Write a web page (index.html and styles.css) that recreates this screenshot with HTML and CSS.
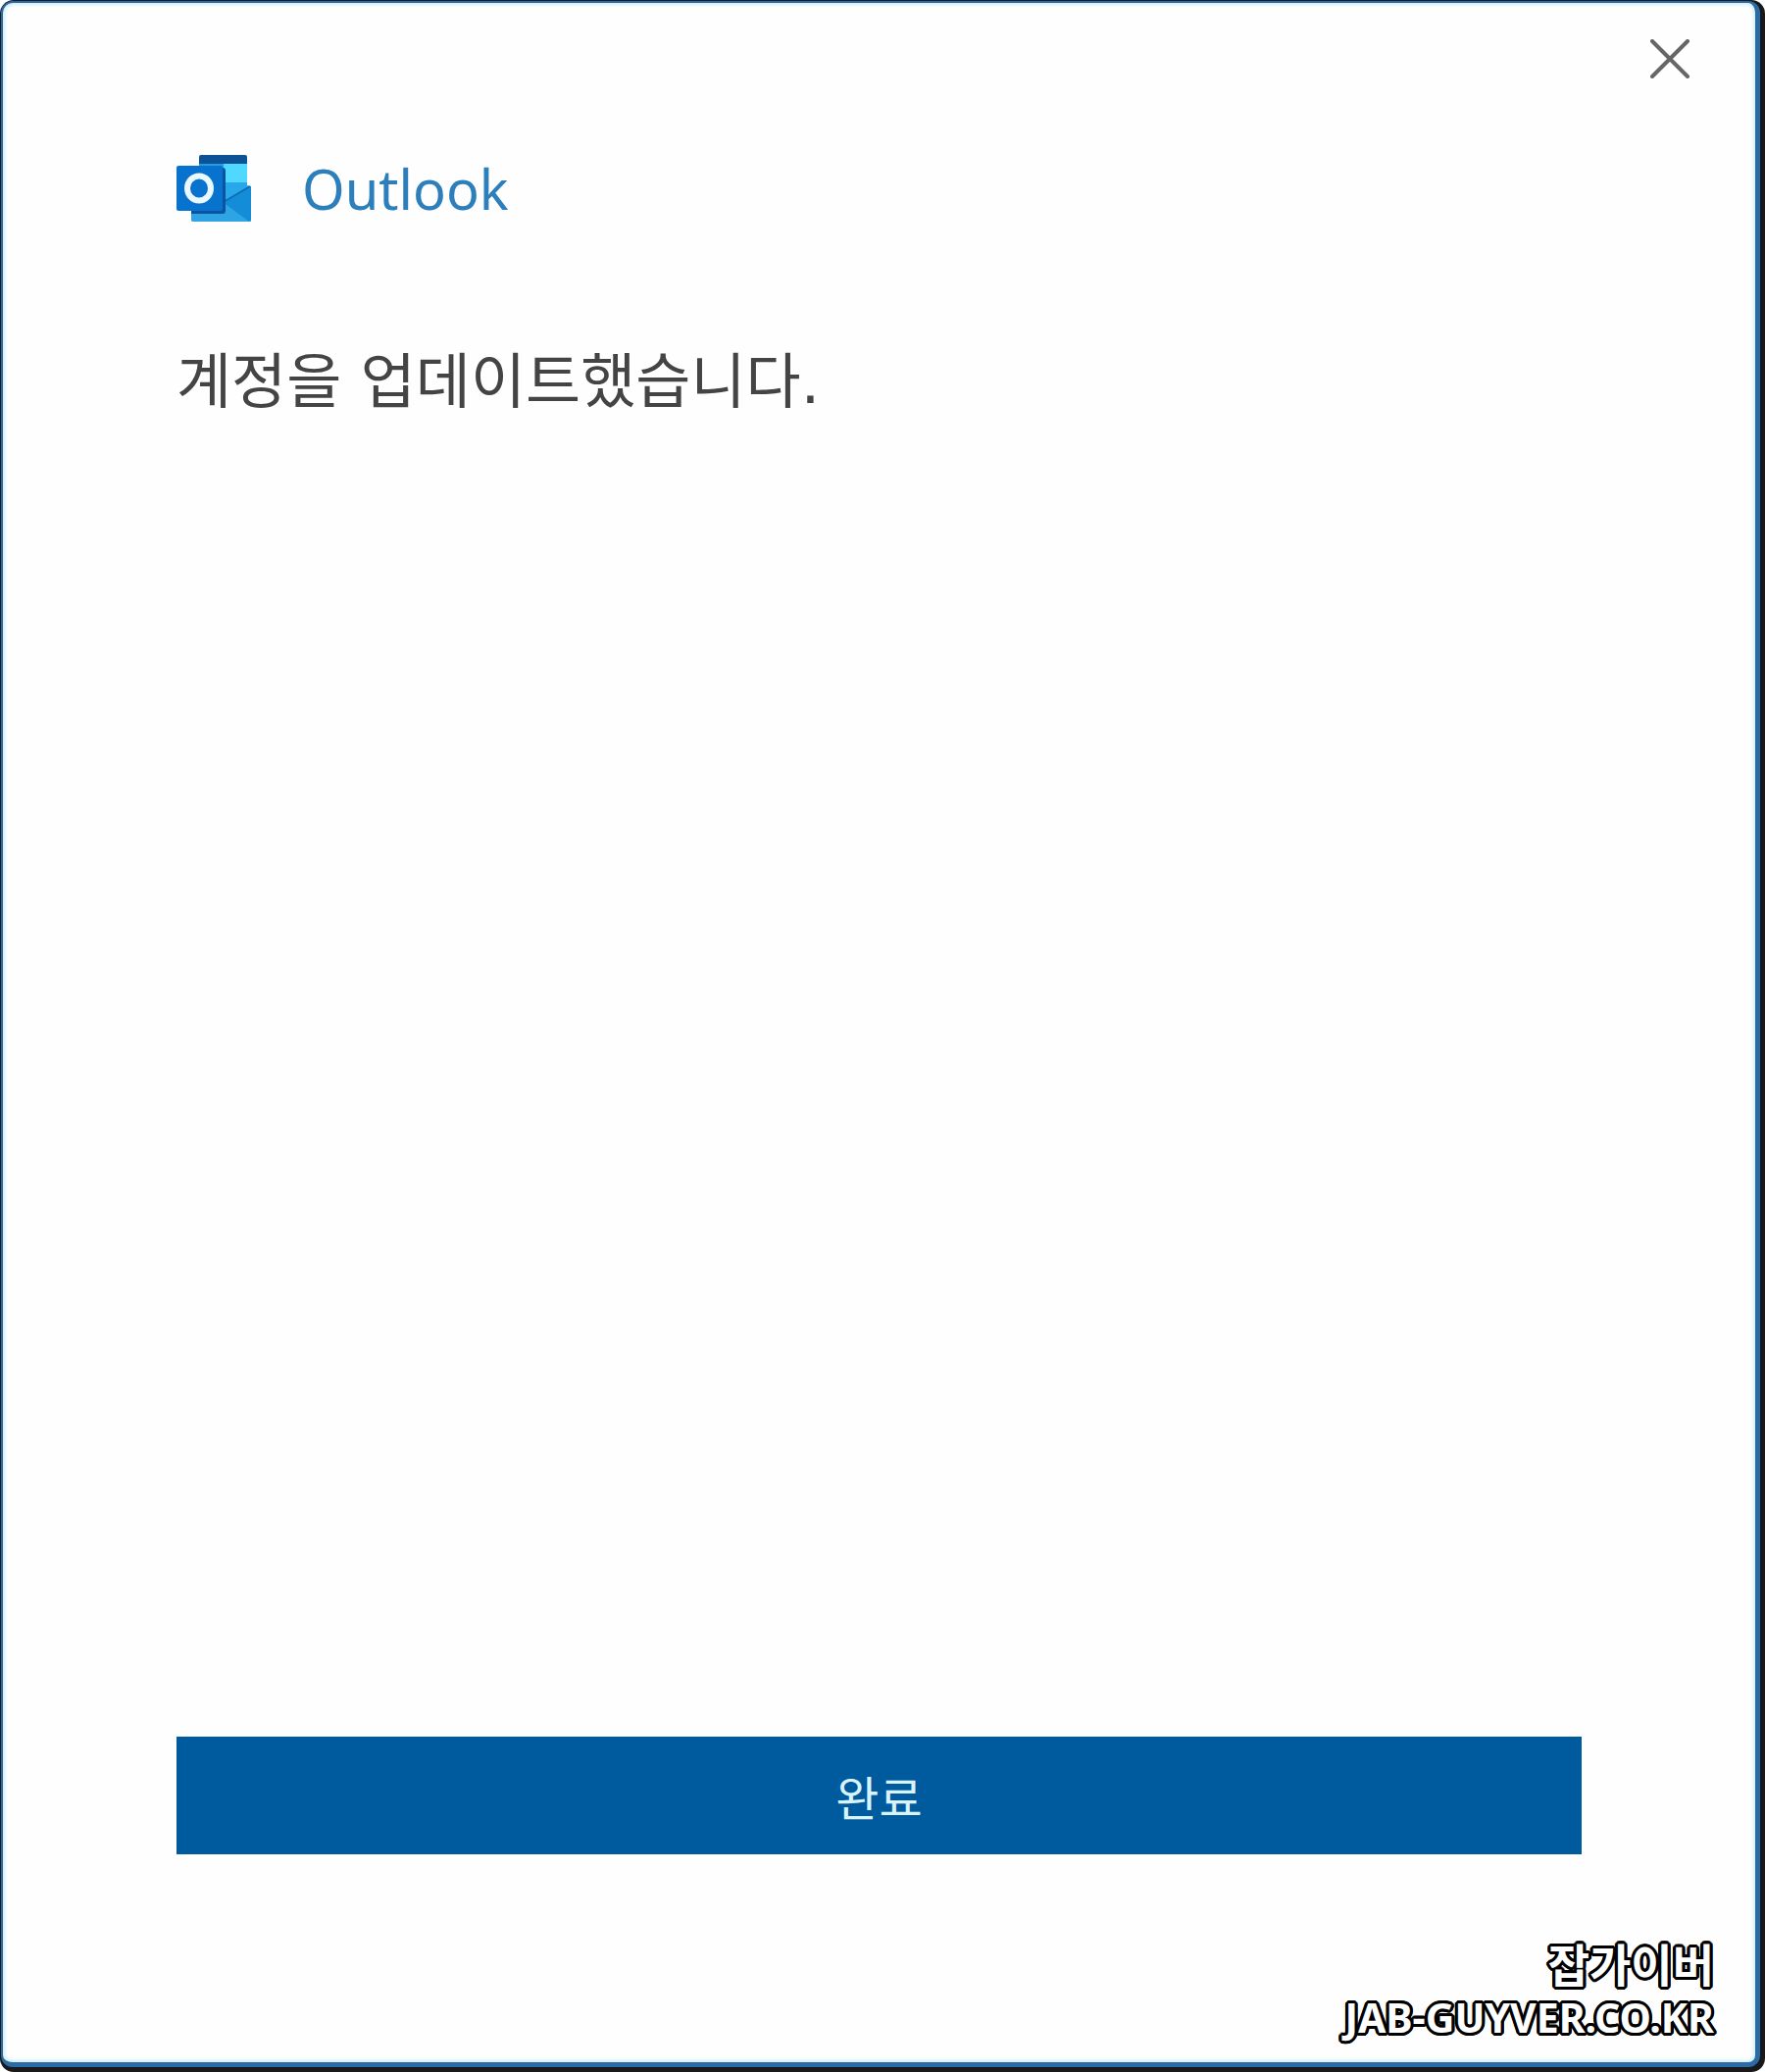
FILE: index.html
```
<!DOCTYPE html>
<html lang="ko">
<head>
<meta charset="utf-8">
<meta name="viewport" content="width=device-width, initial-scale=1">
<title>Outlook</title>
<link rel="stylesheet" href="styles.css">
</head>
<body>
<div class="frame">
  <main class="dialog">
    <div class="titlebar">
      <button class="close" type="button" aria-label="닫기">
        <svg width="40" height="40" viewBox="0 0 40 40" aria-hidden="true"><path d="M2 2 38 38M38 2 2 38" fill="none" stroke="#666" stroke-width="4" stroke-linecap="round"/></svg>
      </button>
    </div>
    <header class="brand">
      <svg class="logo" width="76" height="68" viewBox="0 0 76 68" aria-hidden="true">
        <path fill="#0c5295" d="M23 2q0-2 2-2h45q2 0 2 2v8H23z"/>
        <path fill="#249be3" d="M23 9h25v19H23z"/>
        <path fill="#50d9ff" d="M48 9h24v19H48z"/>
        <path fill="#28a8ea" d="M23 28h49v3l4 1v34q0 2-2 2H17q-2 0-2-2V45z"/>
        <path fill="#148cd8" d="M76 32v34q0 2-2 2L48 49z"/>
        <path fill="#2ea4e5" d="M48 49 74 68H17q-2 0-2-2v-6z"/>
        <path d="M75 32 48 48" stroke="#0c6bb5" stroke-width="2"/>
        <path fill="#0a559d" d="M23 13h24q3 0 3 3v41q0 3-3 3H15V45z"/>
        <rect y="11" width="47" height="46" rx="2" fill="#0873cf"/>
        <ellipse cx="23" cy="34" rx="12" ry="12.500" fill="none" stroke="#e9f9ff" stroke-width="6"/>
      </svg>
      <span class="brand-name">Outlook</span>
    </header>
    <h1 class="message">계정을 업데이트했습니다.</h1>
    <button class="done" type="button">완료</button>
    <footer class="watermark">
      <span class="watermark-name">잡가이버</span>
      <span class="watermark-site">JAB-GUYVER.CO.KR</span>
    </footer>
  </main>
</div>
</body>
</html>
```
FILE: styles.css
```
* {
  box-sizing: border-box;
}

body {
  margin: 0;
  background: #fff;
  font-family: "Noto Sans", "Noto Sans CJK KR", sans-serif;
}

.frame {
  display: flex;
  min-height: 100vh;
  padding: 1px 5px 5px 1px;
  border-radius: 14px;
  background: #19191b;
}

.dialog {
  display: flex;
  flex: 1;
  flex-direction: column;
  border: solid #2a6ba5;
  border-width: 2px 5px 5px 2px;
  border-radius: 12px;
  background: #fefefe;
  box-shadow: inset 0 0 4px 1px #b9e8f5;
}

.titlebar {
  display: flex;
  justify-content: flex-end;
  padding: 27px 57px 0 0;
}

.close {
  display: flex;
  padding: 10px;
  border: 0;
  background: none;
  cursor: pointer;
}

.brand {
  display: flex;
  align-items: center;
  gap: 52px;
  height: 76px;
  margin: 64px 177px 0;
}

.brand-name {
  color: #2c7fbb;
  font-size: 56px;
  line-height: 76px;
}

.message {
  margin: 116px 177px 0;
  color: #444;
  font-family: "DejaVu Sans", "Noto Sans CJK KR", sans-serif;
  font-size: 61px;
  font-weight: 400;
  line-height: 88px;
}

.done {
  height: 120px;
  margin: auto 177px 0;
  border: 0;
  background: #005a9e;
  color: #d9f3fb;
  font-family: "Noto Sans CJK KR", sans-serif;
  font-size: 48px;
  line-height: 64px;
  cursor: pointer;
}

.watermark {
  display: flex;
  flex-direction: column;
  align-items: flex-end;
  margin-top: 82px;
  padding: 0 42px 18px 0;
  color: #fff;
  font-weight: 700;
  line-height: 56px;
  text-shadow:
    3px 0 #000, -3px 0 #000, 0 3px #000, 0 -3px #000,
    2px 2px #000, -2px 2px #000, 2px -2px #000, -2px -2px #000,
    3px 1px #000, 3px -1px #000, -3px 1px #000, -3px -1px #000,
    1px 3px #000, -1px 3px #000, 1px -3px #000, -1px -3px #000;
}

.watermark-name {
  font-family: "Noto Sans CJK KR", sans-serif;
  font-size: 46px;
}

.watermark-site {
  font-size: 41px;
}
```
